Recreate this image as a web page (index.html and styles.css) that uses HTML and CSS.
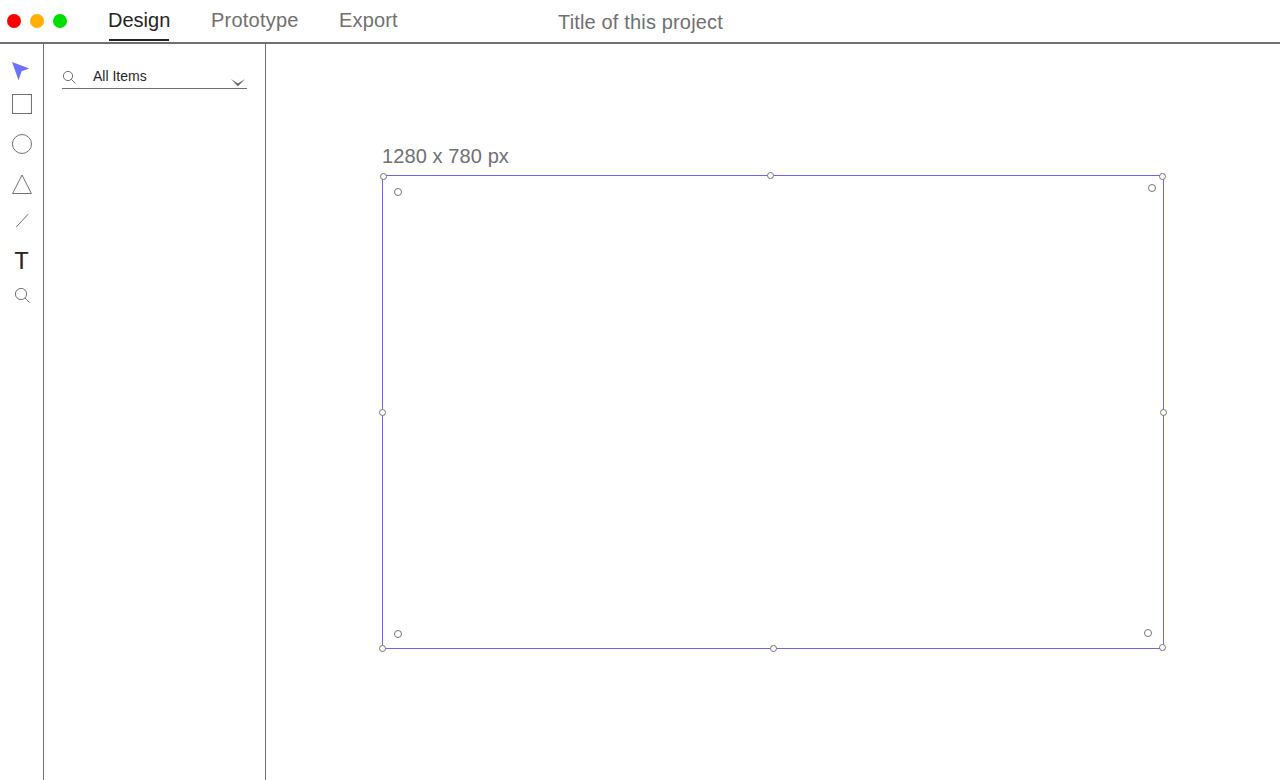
FILE: index.html
```html
<!DOCTYPE html>
<html lang="en">
<head>
<meta charset="utf-8">
<title>Title of this project</title>
<link rel="stylesheet" href="styles.css">
</head>
<body>
<div class="app">
  <header class="topbar">
    <div class="lights"><span class="light red"></span><span class="light amber"></span><span class="light green"></span></div>
    <nav class="tabs">
      <a class="tab active">Design</a>
      <a class="tab prototype">Prototype</a>
      <a class="tab export">Export</a>
    </nav>
    <div class="title">Title of this project</div>
  </header>
  <div class="workspace">
    <aside class="tools">
      <svg class="cursor" width="18" height="19" viewBox="0 0 18 19"><path d="M0 0L17.3 6.4L9.6 9.2L6.6 18.2Z" fill="#6b70ff"/></svg>
      <svg class="square" width="20" height="20"><rect x=".5" y=".5" width="19" height="19"/></svg>
      <svg class="circle" width="20" height="20"><circle cx="10" cy="10" r="9.5"/></svg>
      <svg class="triangle" width="20" height="20"><path d="M10 1L19.4 19.5H.6Z"/></svg>
      <svg class="line" width="13" height="14"><path d="M.2 13.1L12.1.2"/></svg>
      <span class="letter">T</span>
      <svg class="lens" width="16" height="16"><circle cx="6" cy="6" r="5.6"/><path d="M10 10L14.6 14.6"/></svg>
    </aside>
    <aside class="panel">
      <div class="search">
        <svg class="find" width="14" height="14"><circle cx="5" cy="5" r="4.6"/><path d="M8.3 8.3L12.5 12.5"/></svg>
        <span class="label">All Items</span>
        <svg class="chevron" width="14" height="8" viewBox="0 0 14 8"><path d="M0 0L6.9 4.4L14 0L6.9 7.2Z"/></svg>
      </div>
    </aside>
    <main class="canvas">
      <div class="size">1280 x 780 px</div>
      <div class="artboard">
        <i class="handle top-left"></i><i class="handle top"></i><i class="handle top-right"></i>
        <i class="handle left"></i><i class="handle right"></i>
        <i class="handle bottom-left"></i><i class="handle bottom"></i><i class="handle bottom-right"></i>
        <i class="radius radius-tl"></i><i class="radius radius-tr"></i>
        <i class="radius radius-bl"></i><i class="radius radius-br"></i>
      </div>
    </main>
  </div>
</div>
</body>
</html>
```
FILE: styles.css
```css
* { box-sizing: border-box; }
body { margin: 0; background: #fff; color: #707070; font-family: "Liberation Sans", Arial, sans-serif; font-size: 20px; }
svg { display: block; flex: none; fill: none; stroke: #707070; stroke-width: 1; }
.app { height: 780px; display: flex; flex-direction: column; overflow: hidden; }
.topbar { height: 44px; flex: none; display: flex; align-items: flex-start; border-bottom: 2px solid #707070; padding-left: 7px; }
.lights { display: flex; gap: 9px; margin-top: 14px; width: 101px; }
.light { width: 14px; height: 14px; border-radius: 50%; }
.red { background: #f00; }
.amber { background: #ffb000; }
.green { background: #00df00; }
.tabs { display: flex; width: 450px; margin-top: 9px; }
.tab { line-height: 23px; height: 32px; white-space: nowrap; }
.active { color: #252525; width: 60px; margin: 0 42px 0 1px; border-bottom: 2px solid #252525; text-indent: -1px; }
.prototype { width: 128px; letter-spacing: .22px; }
.export { letter-spacing: .15px; }
.title { margin-top: 11px; line-height: 23px; letter-spacing: .16px; white-space: nowrap; }
.workspace { flex: 1; display: flex; min-height: 0; }
.tools { width: 44px; flex: none; border-right: 1px solid #707070; padding: 18px 0 0 12px; }
.cursor { stroke: none; }
.square { margin-top: 13px; }
.circle { margin-top: 20px; }
.triangle { margin-top: 20px; }
.line { margin: 20px 0 0 4px; }
.letter { display: block; width: 20px; height: 27px; margin: 20px 0 0 2.5px; line-height: 27px; font-size: 23px; color: #252525; -webkit-text-stroke: .2px #252525; }
.lens { margin: 13px 0 0 3px; }
.panel { width: 222px; flex: none; border-right: 1px solid #707070; padding: 20px 18px 0 18px; }
.search { height: 25px; display: flex; align-items: flex-start; border-bottom: 1px solid #707070; }
.find { margin: 7px 0 0 1px; }
.label { flex: 1; margin: 4px 0 0 16px; line-height: 16px; font-size: 14px; color: #252525; }
.chevron { margin: 15px 2px 0 0; fill: #606060; stroke: none; }
.canvas { flex: 1; padding: 101px 0 0 116px; }
.size { height: 30px; line-height: 23px; letter-spacing: .1px; }
.artboard { position: relative; width: 782px; height: 474px; border: 1px solid #6c65ee; }
.handle, .radius { position: absolute; width: 7px; height: 7px; border: 1px solid #757575; border-radius: 50%; background: #fff; }
.radius { width: 8px; height: 8px; }
.top-left { left: -3px; top: -3px; }
.top { left: 384px; top: -4px; }
.top-right { left: 776px; top: -3px; }
.left { left: -4px; top: 233px; }
.right { left: 777px; top: 233px; }
.bottom-left { left: -4px; top: 469px; }
.bottom { left: 387px; top: 469px; }
.bottom-right { left: 776px; top: 468px; }
.radius-tl { left: 11px; top: 12px; }
.radius-tr { left: 765px; top: 8px; }
.radius-bl { left: 11px; top: 454px; }
.radius-br { left: 761px; top: 453px; }
```
